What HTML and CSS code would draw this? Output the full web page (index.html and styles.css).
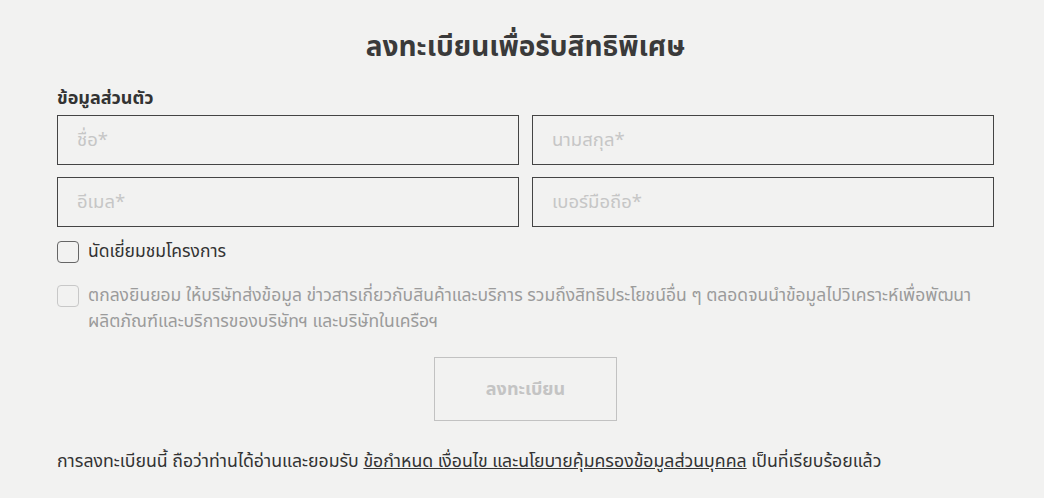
FILE: index.html
```html
<!DOCTYPE html>
<html>
<head>
<meta charset="utf-8">
<title>ลงทะเบียน</title>
<link rel="stylesheet" href="styles.css">
</head>
<body>
<div class="page">
    <h1 class="title">ลงทะเบียนเพื่อรับสิทธิพิเศษ</h1>

    <form class="regform">
        <div class="section-label">ข้อมูลส่วนตัว</div>
        <div class="fields">
            <input class="field" type="text" placeholder="ชื่อ*">
            <input class="field" type="text" placeholder="นามสกุล*">
            <input class="field" type="text" placeholder="อีเมล*">
            <input class="field" type="text" placeholder="เบอร์มือถือ*">
        </div>

        <label class="check">
            <span class="box"></span>
            <span class="check-text">นัดเยี่ยมชมโครงการ</span>
        </label>
        <label class="check check-muted">
            <span class="box"></span>
            <span class="check-text">ตกลงยินยอม ให้บริษัทส่งข้อมูล ข่าวสารเกี่ยวกับสินค้าและบริการ รวมถึงสิทธิประโยชน์อื่น ๆ ตลอดจนนำข้อมูลไปวิเคราะห์เพื่อพัฒนา ผลิตภัณฑ์และบริการของบริษัทฯ และบริษัทในเครือฯ</span>
        </label>

        <div class="actions">
            <button class="submit" type="button">ลงทะเบียน</button>
        </div>

        <p class="note">การลงทะเบียนนี้ ถือว่าท่านได้อ่านและยอมรับ <a href="#">ข้อกำหนด เงื่อนไข และนโยบายคุ้มครองข้อมูลส่วนบุคคล</a> เป็นที่เรียบร้อยแล้ว</p>
    </form>
</div>
</body>
</html>
```

FILE: styles.css
```css
* {
	box-sizing: border-box;
}

body {
	margin: 0;
	background: #f2f2f1;
	color: #333;
	font-family: "Noto Sans Thai", "Noto Sans", "DejaVu Sans", sans-serif;
	font-size: 17.5px;
}

.page {
	width: 937px;
	margin-left: 57px;
	padding-top: 27px;
}

.title {
	margin: 0;
	text-align: center;
	font-size: 28px;
	font-weight: bold;
	color: #3a3a3a;
	line-height: 42px;
}

.section-label {
	margin-top: 18px;
	font-size: 18px;
	font-weight: bold;
	color: #333;
	line-height: 24px;
}

.fields {
	display: grid;
	grid-template-columns: 1fr 1fr;
	gap: 12px 13px;
	margin-top: 4px;
}

.field {
	height: 50px;
	border: 1.5px solid #444;
	background: transparent;
	padding: 0 19px;
	font-family: inherit;
	font-size: 18.5px;
	color: #333;
	outline: none;
}

.field::placeholder {
	color: #c6c6c6;
}

.check {
	display: flex;
	align-items: flex-start;
	gap: 9px;
	margin-top: 12px;
	line-height: 26px;
}

.check .box {
	flex: none;
	width: 22px;
	height: 22px;
	margin-top: 2px;
	border: 1px solid #666;
	border-radius: 4px;
}

.check-muted {
	margin-top: 18px;
	color: #9b9b9b;
}

.check-muted .box {
	border-color: #c8c8c8;
}

.actions {
	display: flex;
	justify-content: center;
	margin-top: 22px;
}

.submit {
	width: 183px;
	height: 64px;
	border: 1.5px solid #c2c2c2;
	background: transparent;
	font-family: inherit;
	font-size: 18px;
	font-weight: bold;
	color: #c4c4c4;
}

.note {
	margin: 29px 0 0;
	font-size: 17.7px;
	line-height: 24px;
	color: #333;
}

.note a {
	color: #333;
	text-decoration: underline;
}
```
